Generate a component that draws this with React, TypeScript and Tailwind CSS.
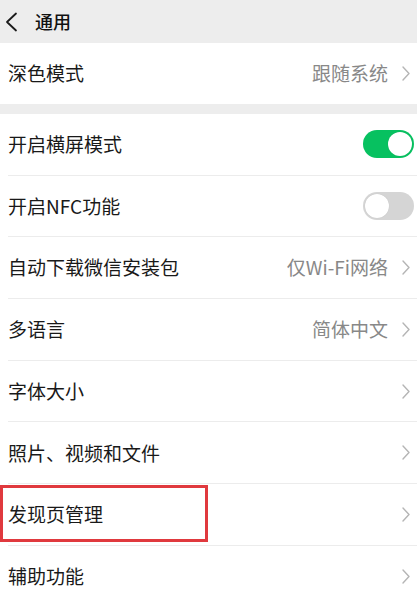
import { useState } from 'react';

type Row = {
  label: string;
  value?: string;
  toggle?: boolean;
  highlight?: boolean;
};

const rows: Row[] = [
  { label: '开启横屏模式', toggle: true },
  { label: '开启NFC功能', toggle: false },
  { label: '自动下载微信安装包', value: '仅Wi-Fi网络' },
  { label: '多语言', value: '简体中文' },
  { label: '字体大小' },
  { label: '照片、视频和文件' },
  { label: '发现页管理', highlight: true },
  { label: '辅助功能' },
];

function Chevron() {
  return (
    <svg width="8" height="15" viewBox="0 0 8 15" fill="none" className="shrink-0 mr-[4px]">
      <path d="M1 1l6 6.5L1 14" stroke="#b5b5b5" strokeWidth="1.4" strokeLinecap="round" strokeLinejoin="round" />
    </svg>
  );
}

function Toggle({ initial }: { initial: boolean }) {
  const [on, setOn] = useState(initial);
  return (
    <button
      onClick={() => setOn(!on)}
      className={`relative w-[51px] h-[28px] rounded-full shrink-0 ${on ? 'bg-[#07c160]' : 'bg-[#d5d5d5]'}`}
    >
      <span
        className={`absolute top-[2px] w-[24px] h-[24px] rounded-full bg-white shadow-[0_0_1px_rgba(0,0,0,0.15)] ${on ? 'left-[25px]' : 'left-[2px]'}`}
      />
    </button>
  );
}

function SettingRow({ row, last }: { row: Row; last?: boolean }) {
  return (
    <div className="relative pl-[8px]">
      <div className={`h-[61.7px] flex items-center pr-[3px] ${last ? '' : 'border-b border-[#ececec]'}`}>
        <span className="flex-1 text-[19px] text-[#191919]">{row.label}</span>
        {row.toggle !== undefined ? (
          <Toggle initial={row.toggle} />
        ) : (
          <div className="flex items-center gap-[14px]">
            {row.value && <span className="text-[19px] text-[#888888]">{row.value}</span>}
            <Chevron />
          </div>
        )}
      </div>
      {row.highlight && (
        <div className="absolute left-0 top-[1px] w-[208px] h-[57px] border-[3px] border-[#e0393e] pointer-events-none" />
      )}
    </div>
  );
}

export default function App() {
  return (
    <div
      className="w-[417px] h-[602px] overflow-hidden bg-[#ededed]"
      style={{ fontFamily: '"Noto Sans CJK SC", "Noto Sans", sans-serif' }}
    >
      <div className="h-[43px] flex items-center pl-[5px] gap-[17px]">
        <svg width="13" height="20" viewBox="0 0 13 20" fill="none">
          <path d="M11 1.5L2 10l9 8.5" stroke="#1a1a1a" strokeWidth="1.8" strokeLinecap="round" strokeLinejoin="round" />
        </svg>
        <span className="text-[18px] font-medium text-[#111111]">通用</span>
      </div>

      <div className="bg-white pl-[8px] pr-[3px] h-[61px] flex items-center">
        <span className="flex-1 text-[19px] text-[#191919]">深色模式</span>
        <div className="flex items-center gap-[14px]">
          <span className="text-[19px] text-[#888888]">跟随系统</span>
          <Chevron />
        </div>
      </div>

      <div className="mt-[10px] bg-white">
        {rows.map((row, i) => (
          <SettingRow key={row.label} row={row} last={i === rows.length - 1} />
        ))}
      </div>
    </div>
  );
}
